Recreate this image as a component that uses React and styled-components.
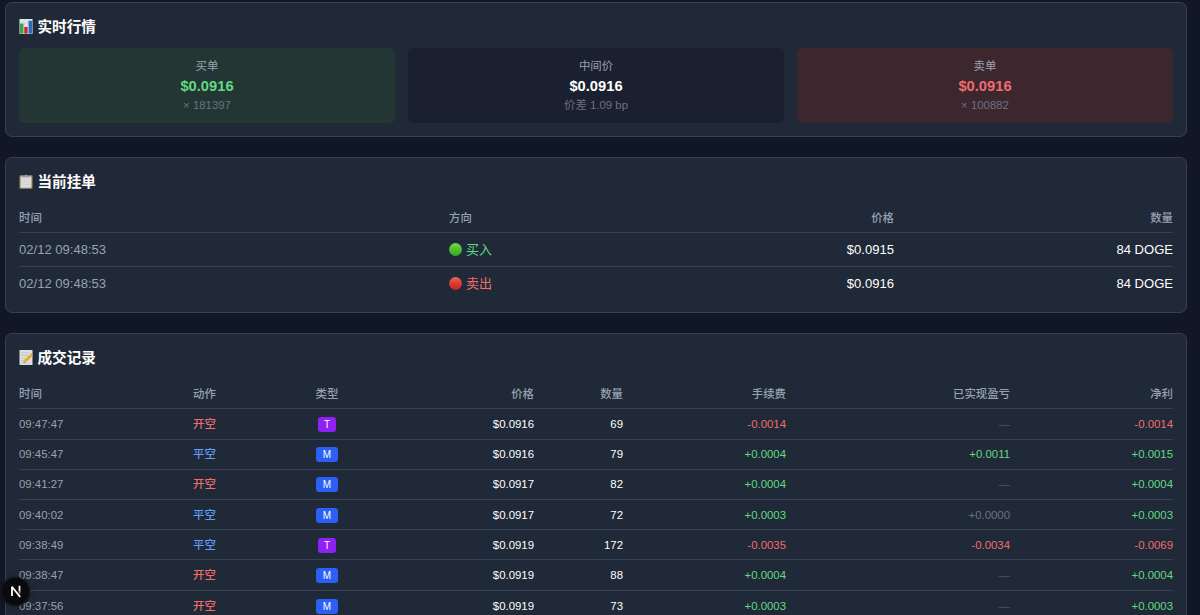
import React from 'react'
import styled, { createGlobalStyle, css } from 'styled-components'

const color = {
    page: '#111727',
    card: '#1f2937',
    line: '#374151',
    muted: '#99a1af',
    dim: '#6a7282',
    faint: '#4a5565',
    green: '#62d983',
    red: '#f06c6e',
    blue: '#5f9ff5',
    white: '#fff',
}

const GlobalStyle = createGlobalStyle`
    body {
        margin: 0;
        background: ${color.page};
        color: #fff;
        font-family: 'Liberation Sans', 'Noto Sans CJK SC', sans-serif;
    }
`

const Page = styled.main`
    box-sizing: border-box;
    display: flex;
    flex-direction: column;
    gap: 20px;
    height: 615px;
    padding: 2px 13px 0 5px;
    overflow: hidden;
`

const Card = styled.section`
    box-sizing: border-box;
    flex: none;
    height: ${props => props.$height}px;
    padding: 13px;
    background: ${color.card};
    border: 1px solid ${color.line};
    border-radius: 7px;
`

const Title = styled.h2`
    display: flex;
    align-items: center;
    gap: 4.5px;
    height: 22px;
    margin: 0;
    font-size: 14.6px;
    line-height: 22px;
    font-weight: 600;

    svg {
        flex: none;
        margin-bottom: 2px;
    }
`

const Quotes = styled.div`
    display: grid;
    grid-template-columns: repeat(3, 1fr);
    gap: 13px;
    margin-top: 10px;
`

const tones = {
    buy: css`
        background: #233634;
    `,
    mid: css`
        background: #1a2030;
    `,
    sell: css`
        background: #3c272f;
    `,
}

const Quote = styled.div`
    box-sizing: border-box;
    height: 75px;
    padding-top: 10px;
    border-radius: 5px;
    text-align: center;
    ${props => tones[props.$tone]};
`

const QuoteLabel = styled.div`
    color: ${color.muted};
    font-size: 11.4px;
    line-height: 17px;
`

const QuotePrice = styled.div`
    color: ${props => color[props.$color]};
    font-size: 14.7px;
    line-height: 23px;
    font-weight: 700;
`

const QuoteSub = styled.div`
    color: ${color.dim};
    font-size: 11.4px;
    line-height: 15px;
`

const Row = styled.div`
    display: grid;
    align-items: center;
    box-sizing: border-box;
    border-bottom: 1px solid ${color.line};

    &:last-child {
        border-bottom: 0;
    }
`

const OrderRow = styled(Row)`
    grid-template-columns: 430px 200px 245px 279px;
    height: 33.5px;
    padding-top: 1px;
    font-size: 13.05px;
`

const OrderHead = styled(OrderRow)`
    height: 34px;
    margin-top: 6px;
    padding-top: 5px;
    color: ${color.muted};
    font-size: 11.4px;
    font-weight: 500;
`

const TradeRow = styled(Row)`
    grid-template-columns: 174px 110px 48px 183px 89px 163px 224px 163px;
    height: 30.2px;
    font-size: 11.4px;
`

const TradeHead = styled(TradeRow)`
    height: 34.4px;
    margin-top: 6px;
    padding-top: 5px;
    color: ${color.muted};
    font-weight: 500;
`

const Cell = styled.span`
    display: block;
    color: ${props => color[props.$color] || 'inherit'};
    line-height: 16px;
    text-align: ${props => props.$align || 'left'};
    font-weight: ${props => (props.$medium ? 500 : 'inherit')};
    white-space: nowrap;
`

const SideCell = styled(Cell)`
    display: flex;
    align-items: center;
    gap: 4px;

    svg {
        margin-bottom: 1px;
    }
`

const BadgeCell = styled(Cell)`
    display: flex;
    justify-content: center;
    padding-top: 1px;
`

const Badge = styled.span`
    padding: 0 6.4px;
    border-radius: 3px;
    background: ${props => (props.$type === 'T' ? '#9020f5' : '#2b5ff5')};
    color: #fff;
    font-size: 10px;
    line-height: 15px;
`

const DevBadge = styled.div`
    position: fixed;
    left: 1px;
    bottom: 9px;
    display: flex;
    width: 29px;
    height: 29px;
    border-radius: 50%;
    background: #0a0a0b;
    box-shadow: inset 0 0 0 1px #17181b, 0 1px 5px rgba(0, 0, 0, 0.35);
`

const ChartIcon = () => (
    <svg width="14" height="15" viewBox="0 0 14 15">
        <rect x="0.5" width="13" height="15" fill="#dfe6ed" />
        <path d="M.5 4h13M.5 8h13M.5 12h13M5 0v15M9.3 0v15" stroke="#bac8d6" strokeWidth=".5" />
        <rect x="1" y="4.6" width="3.4" height="10" fill="#43a047" />
        <rect x="5.3" y="8" width="3.3" height="6.6" fill="#c62828" />
        <rect x="9.6" y="1.8" width="3.4" height="12.8" fill="#3268bd" />
    </svg>
)

const ClipboardIcon = () => (
    <svg width="14" height="15" viewBox="0 0 14 15">
        <rect x=".5" y="1.3" width="13" height="13.5" rx=".8" fill="#a18b6b" />
        <rect x="1.7" y="2.7" width="10.6" height="11" fill="#dcdcdc" />
        <path d="M3.6 3.6V2.1h2C5.7.3 8.3.3 8.4 2.1h2v1.5z" fill="#9b9fa3" />
        <path d="M3 6h8M3 8.2h8M3 10.4h8" stroke="#cacaca" strokeWidth=".5" />
    </svg>
)

const MemoIcon = () => (
    <svg width="14" height="15" viewBox="0 0 14 15">
        <rect x=".5" width="13" height="15" fill="#dedede" />
        <path d="M2 3h8M2 5.5h7M2 8h4M2 10.5h3M2 13h8" stroke="#b1b1b1" strokeWidth=".6" />
        <path d="M4.5 12.7l1-3.1 6-5.5 2 2.1-6 5.5z" fill="#e7b832" />
        <path d="M6.5 10.7l6-5.5" stroke="#b98620" strokeWidth=".7" />
        <path d="M11.5 4.1l1-.9 1.5 1.6v1z" fill="#d58c82" />
        <path d="M4.5 12.7l.4-1.3.9.9z" fill="#444" />
    </svg>
)

const Dot = ({ side }) => (
    <svg width="13" height="13" viewBox="0 0 13 13">
        <defs>
            <linearGradient id={`dot-${side}`} x1="0" y1="0" x2="0" y2="1">
                <stop offset="0" stopColor={side === 'buy' ? '#78d64f' : '#ed665b'} />
                <stop offset=".5" stopColor={side === 'buy' ? '#4fbf2f' : '#dc3a31'} />
                <stop offset="1" stopColor={side === 'buy' ? '#3aa51f' : '#bd2922'} />
            </linearGradient>
        </defs>
        <circle cx="6.5" cy="6.5" r="6.4" fill={`url(#dot-${side})`} />
    </svg>
)

const NextIcon = () => (
    <svg width="29" height="29" viewBox="0 0 29 29" fill="none">
        <defs>
            <linearGradient id="next-stem" x1="0" y1="0" x2="0" y2="1">
                <stop offset=".4" stopColor="#fff" />
                <stop offset="1" stopColor="#fff" stopOpacity="0" />
            </linearGradient>
        </defs>
        <path d="M11 19V9.7l8.2 10.3" stroke="#fff" strokeWidth="1.8" strokeLinejoin="bevel" />
        <rect x="17.6" y="8.8" width="1.8" height="9.5" fill="url(#next-stem)" />
    </svg>
)

const quotes = [
    { tone: 'buy', label: '买单', price: '$0.0916', color: 'green', sub: '× 181397' },
    { tone: 'mid', label: '中间价', price: '$0.0916', color: 'white', sub: '价差 1.09 bp' },
    { tone: 'sell', label: '卖单', price: '$0.0916', color: 'red', sub: '× 100882' },
]

const orders = [
    { time: '02/12 09:48:53', side: 'buy', price: '$0.0915', size: '84 DOGE' },
    { time: '02/12 09:48:53', side: 'sell', price: '$0.0916', size: '84 DOGE' },
]

const trades = [
    ['09:47:47', '开空', 'T', '$0.0916', '69', '-0.0014', '—', '-0.0014'],
    ['09:45:47', '平空', 'M', '$0.0916', '79', '+0.0004', '+0.0011', '+0.0015'],
    ['09:41:27', '开空', 'M', '$0.0917', '82', '+0.0004', '—', '+0.0004'],
    ['09:40:02', '平空', 'M', '$0.0917', '72', '+0.0003', '+0.0000', '+0.0003'],
    ['09:38:49', '平空', 'T', '$0.0919', '172', '-0.0035', '-0.0034', '-0.0069'],
    ['09:38:47', '开空', 'M', '$0.0919', '88', '+0.0004', '—', '+0.0004'],
    ['09:37:56', '开空', 'M', '$0.0919', '73', '+0.0003', '—', '+0.0003'],
]

const amountColor = value => {
    if (value === '—') return 'faint'
    if (Number(value) === 0) return 'dim'
    return value.startsWith('-') ? 'red' : 'green'
}

const Market = () => (
    <Card $height={135}>
        <Title>
            <ChartIcon />
            实时行情
        </Title>
        <Quotes>
            {quotes.map(quote => (
                <Quote key={quote.tone} $tone={quote.tone}>
                    <QuoteLabel>{quote.label}</QuoteLabel>
                    <QuotePrice $color={quote.color}>{quote.price}</QuotePrice>
                    <QuoteSub>{quote.sub}</QuoteSub>
                </Quote>
            ))}
        </Quotes>
    </Card>
)

const Orders = () => (
    <Card $height={156}>
        <Title>
            <ClipboardIcon />
            当前挂单
        </Title>
        <OrderHead>
            <Cell>时间</Cell>
            <Cell>方向</Cell>
            <Cell $align="right">价格</Cell>
            <Cell $align="right">数量</Cell>
        </OrderHead>
        {orders.map(order => (
            <OrderRow key={order.side}>
                <Cell $color="muted">{order.time}</Cell>
                <SideCell $color={order.side === 'buy' ? 'green' : 'red'}>
                    <Dot side={order.side} />
                    {order.side === 'buy' ? '买入' : '卖出'}
                </SideCell>
                <Cell $align="right">{order.price}</Cell>
                <Cell $align="right">{order.size}</Cell>
            </OrderRow>
        ))}
    </Card>
)

const Trades = () => (
    <Card $height={300}>
        <Title>
            <MemoIcon />
            成交记录
        </Title>
        <TradeHead>
            <Cell>时间</Cell>
            <Cell>动作</Cell>
            <Cell $align="center">类型</Cell>
            <Cell $align="right">价格</Cell>
            <Cell $align="right">数量</Cell>
            <Cell $align="right">手续费</Cell>
            <Cell $align="right">已实现盈亏</Cell>
            <Cell $align="right">净利</Cell>
        </TradeHead>
        {trades.map(([time, action, type, price, size, fee, pnl, net]) => (
            <TradeRow key={time}>
                <Cell $color="muted">{time}</Cell>
                <Cell $medium $color={action === '开空' ? 'red' : 'blue'}>
                    {action}
                </Cell>
                <BadgeCell>
                    <Badge $type={type}>{type}</Badge>
                </BadgeCell>
                <Cell $align="right">{price}</Cell>
                <Cell $align="right">{size}</Cell>
                <Cell $align="right" $color={amountColor(fee)}>
                    {fee}
                </Cell>
                <Cell $align="right" $color={amountColor(pnl)}>
                    {pnl}
                </Cell>
                <Cell $align="right" $color={amountColor(net)}>
                    {net}
                </Cell>
            </TradeRow>
        ))}
    </Card>
)

const App = () => (
    <>
        <GlobalStyle />
        <Page>
            <Market />
            <Orders />
            <Trades />
        </Page>
        <DevBadge>
            <NextIcon />
        </DevBadge>
    </>
)

export default App
